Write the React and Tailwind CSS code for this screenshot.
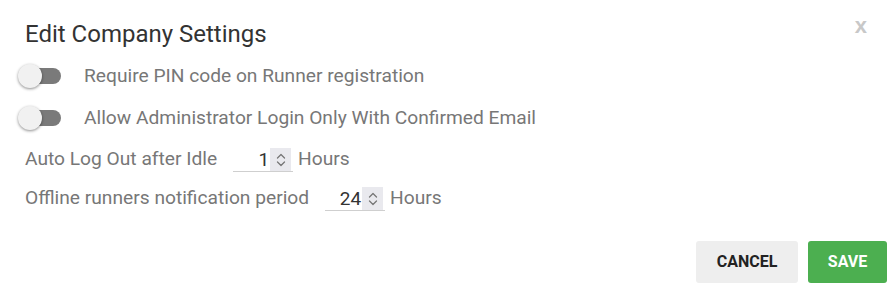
import React from "react";

function Toggle() {
  return (
    <div className="relative w-[46px] h-[26px] shrink-0">
      <div className="absolute left-[4px] top-[5px] w-[40px] h-[16px] rounded-full bg-[#7a7a7a]" />
      <div className="absolute left-[1px] top-[1px] w-[24px] h-[24px] rounded-full bg-[#f1f1f1] shadow-[0_1px_3px_rgba(0,0,0,0.45)]" />
    </div>
  );
}

function Spinner() {
  return (
    <div className="w-[21px] h-[23px] bg-[#e9e9ee] flex items-center justify-center">
      <svg width="12" height="18" viewBox="0 0 12 18" fill="none" stroke="#777" strokeWidth="1.3" strokeLinecap="round" strokeLinejoin="round">
        <path d="M2.5 7 L6 3.5 L9.5 7" />
        <path d="M2.5 11 L6 14.5 L9.5 11" />
      </svg>
    </div>
  );
}

function NumberField({ value }) {
  return (
    <div className="flex items-end w-[60px] h-[25px] border-b border-[#cfcfcf]">
      <div className="flex-1 text-right text-[19px] leading-[23px] text-[#333] pr-[1px]">{value}</div>
      <Spinner />
      <div className="w-[2px]" />
    </div>
  );
}

export default function App() {
  return (
    <div className="w-[888px] h-[287px] bg-white relative font-['Roboto',sans-serif] overflow-hidden">
      <div className="absolute right-[21px] top-[13px] text-[#c8c8c8] font-bold text-[22px] leading-[26px] font-['Liberation_Sans',sans-serif]">x</div>
      <div className="pl-[25px] pt-[19px] text-[24px] leading-[30px] text-[#333]">Edit Company Settings</div>
      <div className="pl-[17px] pt-[14px] flex flex-col gap-[16px]">
        <div className="flex items-center h-[26px]">
          <Toggle />
          <span className="ml-[21px] text-[19.2px] text-[#777]">Require PIN code on Runner registration</span>
        </div>
        <div className="flex items-center h-[26px]">
          <Toggle />
          <span className="ml-[21px] text-[19.2px] text-[#777]">Allow Administrator Login Only With Confirmed Email</span>
        </div>
      </div>
      <div className="pl-[25px] pt-[15px] flex flex-col gap-[13px]">
        <div className="flex items-end h-[26px]">
          <span className="text-[19.2px] leading-[26px] text-[#777]">Auto Log Out after Idle</span>
          <div className="ml-[16px]"><NumberField value="1" /></div>
          <span className="ml-[5px] text-[19.2px] leading-[26px] text-[#777]">Hours</span>
        </div>
        <div className="flex items-end h-[26px]">
          <span className="text-[19.2px] leading-[26px] text-[#777]">Offline runners notification period</span>
          <div className="ml-[16px]"><NumberField value="24" /></div>
          <span className="ml-[5px] text-[19.2px] leading-[26px] text-[#777]">Hours</span>
        </div>
      </div>
      <div className="absolute right-[1px] bottom-[4px] flex gap-[10px]">
        <button className="w-[102px] h-[42px] rounded-[3px] bg-[#eeeeee] text-[#222] font-bold text-[16px] uppercase">Cancel</button>
        <button className="w-[79px] h-[42px] rounded-[3px] bg-[#4caf50] text-white font-bold text-[16px] uppercase">Save</button>
      </div>
    </div>
  );
}
